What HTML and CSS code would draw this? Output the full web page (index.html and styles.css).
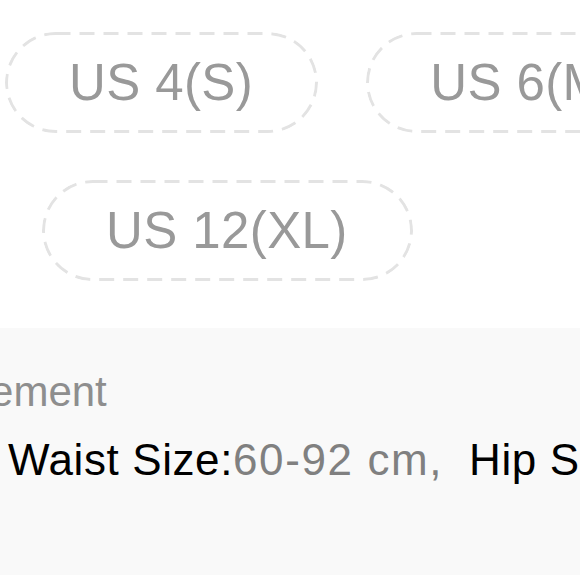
FILE: index.html
```html
<!DOCTYPE html>
<html>
<head>
<meta charset="utf-8">
<link rel="stylesheet" href="styles.css">
</head>
<body>
<div class="page">
  <section class="sizes">
    <div class="size-row row-one">
      <span class="chip">US 4(S)</span>
      <span class="chip">US 6(M)</span>
    </div>
    <div class="size-row row-two">
      <span class="chip">US 12(XL)</span>
    </div>
  </section>
  <section class="measure">
    <div class="measure-title">Measurement</div>
    <div class="measure-line"><span class="label">Waist Size:</span><span class="value">60-92 cm,</span><span class="label label-next">Hip Size:</span><span class="value">88-110 cm</span></div>
  </section>
</div>
</body>
</html>
```
FILE: styles.css
```css
html, body {
  margin: 0;
  padding: 0;
  background: #ffffff;
}
.page {
  width: 580px;
  height: 580px;
  overflow: hidden;
  font-family: "Liberation Sans", Arial, sans-serif;
}
.sizes {
  padding-top: 32px;
  display: flex;
  flex-direction: column;
  gap: 47px;
}
.size-row {
  display: flex;
  gap: 48px;
  white-space: nowrap;
}
.row-one {
  padding-left: 5px;
}
.row-two {
  padding-left: 42px;
}
.chip {
  flex: none;
  box-sizing: border-box;
  height: 101px;
  line-height: 101px;
  padding: 0 65px 0 64px;
  border-radius: 51px;
  background-image: url("data:image/svg+xml,%3Csvg xmlns='http://www.w3.org/2000/svg'%3E%3Crect x='1.5' y='1.5' rx='49' ry='49' style='width:calc(100%25 - 3px);height:calc(100%25 - 3px)' fill='none' stroke='%23e3e3e3' stroke-width='3' stroke-dasharray='15 9'/%3E%3C/svg%3E");
  background-size: 100% 100%;
  background-repeat: no-repeat;
  font-size: 51px;
  letter-spacing: 0.4px;
  color: #999999;
}
.measure {
  margin-top: 47px;
  height: 247px;
  box-sizing: border-box;
  background: #f9f9f9;
  padding: 30px 0 0 8px;
  font-size: 44px;
  line-height: 68px;
  white-space: nowrap;
}
.measure-title {
  color: #8e8e8e;
  font-size: 42px;
  margin-left: -158px;
}
.measure-line .label {
  color: #000000;
  letter-spacing: 0.6px;
}
.measure-line .label-next {
  margin-left: 26px;
}
.measure-line .value {
  color: #808080;
  letter-spacing: 1.6px;
}
```
